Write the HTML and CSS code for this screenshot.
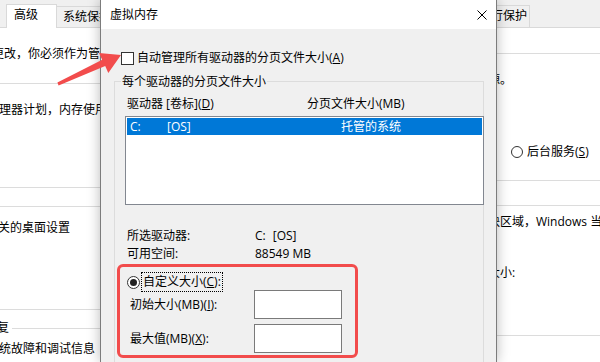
FILE: index.html
```html
<!DOCTYPE html>
<html lang="zh-CN">
<head>
<meta charset="utf-8">
<title>虚拟内存</title>
<link rel="stylesheet" href="styles.css">
</head>
<body>
<div class="desktop">
  <section class="win">
    <div class="tabs">
      <div class="tab tab-active">高级</div>
      <div class="tab tab-next">系统保护</div>
    </div>
    <div class="win-body">
      <p class="txt note">更改，你必须作为管理员登录。</p>
      <div class="gbox gbox-perf"><p class="txt perf">处理器计划，内存使用，以及虚拟内存</p></div>
      <div class="gbox gbox-profile"><p class="txt profile">相关的桌面设置</p></div>
      <div class="gbox gbox-startup">
        <p class="gtitle">恢复</p>
        <p class="txt startup">系统故障和调试信息</p>
      </div>
    </div>
  </section>
  <section class="win">
    <div class="tabs">
      <div class="tab tab-dep">数据执行保护</div>
    </div>
    <div class="win-body">
      <div class="gbox gbox-sched">
        <p class="txt ind">选择如何分配处理器资源。</p>
        <div class="radio-line"><span class="radio"></span><span>后台服务(<u>S</u>)</span></div>
      </div>
      <div class="gbox gbox-vm">
        <p class="txt ind">分页文件是硬盘上的一块区域，Windows 当作 RAM 使用。</p>
        <p class="txt ind total">所有驱动器总分页文件大小:</p>
      </div>
    </div>
  </section>
</div>

<div class="dialog">
  <div class="titlebar">
    <span class="title">虚拟内存</span>
    <svg class="close" viewBox="0 0 10 10" width="10" height="10"><path d="M0.5 0.5 L9.5 9.5 M9.5 0.5 L0.5 9.5" stroke="#000" stroke-width="1" fill="none"/></svg>
  </div>
  <div class="dbody">
    <div class="check-row"><span class="checkbox"></span><span>自动管理所有驱动器的分页文件大小(<u>A</u>)</span></div>
    <div class="group">
      <div class="group-title">每个驱动器的分页文件大小</div>
      <div class="cols"><span class="col-drive">驱动器 [卷标](<u>D</u>)</span><span>分页文件大小(MB)</span></div>
      <div class="listbox">
        <div class="row-sel"><span class="c1">C:</span><span class="c2">[OS]</span><span>托管的系统</span></div>
      </div>
      <div class="info info-first"><span class="info-label">所选驱动器:</span><span><span class="drive-letter">C:</span>[OS]</span></div>
      <div class="info"><span class="info-label">可用空间:</span><span>88549 MB</span></div>
      <div class="redbox">
        <div class="radio-row"><span class="radio-on"></span><span class="focus">自定义大小(<u>C</u>):</span></div>
        <div class="field field-first"><span class="field-label">初始大小(MB)(<u>I</u>):</span><span class="input"></span></div>
        <div class="field"><span class="field-label">最大值(MB)(<u>X</u>):</span><span class="input"></span></div>
      </div>
    </div>
  </div>
</div>

<svg class="arrow" viewBox="0 0 130 90" width="130" height="90">
  <polygon points="121,55 99,53 102.2,59.7 57.4,82.6 58.6,85.4 105.2,66.1 108.3,72.9" fill="#f24c4c"/>
</svg>
</body>
</html>
```

FILE: styles.css
```css
* { box-sizing: border-box; margin: 0; padding: 0; }
html, body { width: 600px; height: 362px; overflow: hidden; }
body {
  position: relative;
  background: #fff;
  color: #000;
  font-family: "Open Sans", "Noto Sans CJK SC", sans-serif;
  font-size: 12px;
  line-height: 18px;
}
u { text-decoration: underline; text-underline-offset: 1px; }

.desktop { display: flex; width: 600px; height: 362px; }
.win { flex: 0 0 300px; height: 362px; overflow: hidden; background: #fff; }

.tabs {
  display: flex;
  align-items: flex-end;
  height: 28px;
  background: #f0f0f0;
  border-bottom: 1px solid #d9d9d9;
}
.tab { white-space: nowrap; line-height: 18px; }
.tab-active {
  position: relative;
  width: 51px;
  height: 24px;
  margin: 0 0 -1px 6px;
  padding: 1px 0 0 7px;
  background: #fff;
  border: 1px solid #d9d9d9;
  border-bottom: none;
}
.tab-next {
  height: 21px;
  padding: 1px 8px 0 6px;
  border-top: 1px solid #d9d9d9;
  border-right: 1px solid #d9d9d9;
}
.tab-dep {
  height: 22px;
  margin-left: 146px;
  padding: 1px 2px 0 8px;
  border: 1px solid #d9d9d9;
  border-bottom: none;
}

.txt { white-space: nowrap; line-height: 18px; }
.gbox { border-top: 1px solid #dcdcdc; border-bottom: 1px solid #dcdcdc; }

.note { margin: 17px 0 0 -8px; }
.gbox-perf { margin-top: 20px; padding: 17px 0 68px; }
.perf { margin-left: -13px; }
.gbox-profile { margin-top: 18px; padding: 12px 0 72px; }
.profile { margin-left: -14px; }
.gbox-startup { margin-top: 18px; border-bottom: none; }
.gtitle {
  width: max-content;
  margin: -10px 0 0 -15px;
  padding-right: 3px;
  background: #fff;
  white-space: nowrap;
}
.startup { margin: 3px 0 0 -13px; }

.gbox-sched { margin-top: 25px; padding: 17px 0 19px; }
.ind { margin-left: 68px; }
.radio-line {
  display: flex;
  align-items: center;
  gap: 4px;
  height: 18px;
  margin: 54px 0 0 211px;
  white-space: nowrap;
}
.radio { width: 12px; height: 12px; border: 1px solid #333; border-radius: 50%; background: #fff; flex: none; }
.gbox-vm { margin-top: 24px; padding: 7px 0 53px; }
.total { margin-top: 33px; }

/* dialog */
.dialog {
  position: absolute;
  left: 100px;
  top: 0;
  width: 397px;
  height: 362px;
  background: #f0f0f0;
  border-left: 1px solid #7c7c7c;
  border-right: 1px solid #7c7c7c;
  box-shadow: 0 0 12px rgba(0, 0, 0, 0.28);
  overflow: hidden;
  white-space: nowrap;
}
.titlebar {
  display: flex;
  align-items: center;
  justify-content: space-between;
  height: 29px;
  padding: 0 9px;
  background: #fff;
}
.title { padding-top: 1px; }
.close { display: block; }

.dbody { padding: 20px 0 0 13px; }
.check-row { display: flex; align-items: center; gap: 3px; height: 18px; margin-left: 7px; }
.checkbox { width: 13px; height: 13px; border: 1px solid #333; background: #fff; flex: none; }

.group {
  width: 370px;
  height: 320px;
  margin-top: 14px;
  border: 1px solid #dcdcdc;
  border-bottom: none;
}
.group-title { width: max-content; margin: -9px 0 0 6px; padding: 0 1px; background: #f0f0f0; }
.cols { display: flex; margin: 4px 0 0 12px; }
.col-drive { width: 180px; }

.listbox {
  width: 359px;
  height: 89px;
  margin: 3px 0 0 10px;
  padding: 1px;
  background: #fff;
  border: 1px solid #828790;
}
.row-sel {
  display: flex;
  height: 17px;
  line-height: 17px;
  padding-left: 3px;
  background: #0078d7;
  color: #fff;
}
.c1 { width: 37px; }
.c2 { width: 174px; }

.info { display: flex; margin-left: 12px; }
.info-first { margin-top: 22px; }
.info-label { width: 128px; }
.drive-letter { margin-right: 7px; }

.redbox {
  width: 241px;
  height: 94px;
  margin: 1px 0 0 2px;
  padding: 6px 0 0 7px;
  border: 3px solid #f24c4c;
  border-radius: 6px;
}
.radio-row { display: flex; align-items: center; gap: 2px; height: 18px; }
.radio-on {
  display: flex;
  align-items: center;
  justify-content: center;
  width: 13px;
  height: 13px;
  border: 1px solid #333;
  border-radius: 50%;
  background: #fff;
  flex: none;
}
.radio-on::after { content: ""; width: 7px; height: 7px; border-radius: 50%; background: #222; }
.focus { padding: 0 1px; line-height: 18px; outline: 1px dotted #000; }

.field { display: flex; align-items: center; height: 29px; }
.field-first { margin-top: -1px; }
.field + .field { margin-top: 5px; }
.field-label { width: 124px; margin-left: 3px; }
.input { width: 88px; height: 29px; border: 1px solid #7a7a7a; background: #fff; }

.arrow { position: absolute; left: 0; top: 0; }
```
